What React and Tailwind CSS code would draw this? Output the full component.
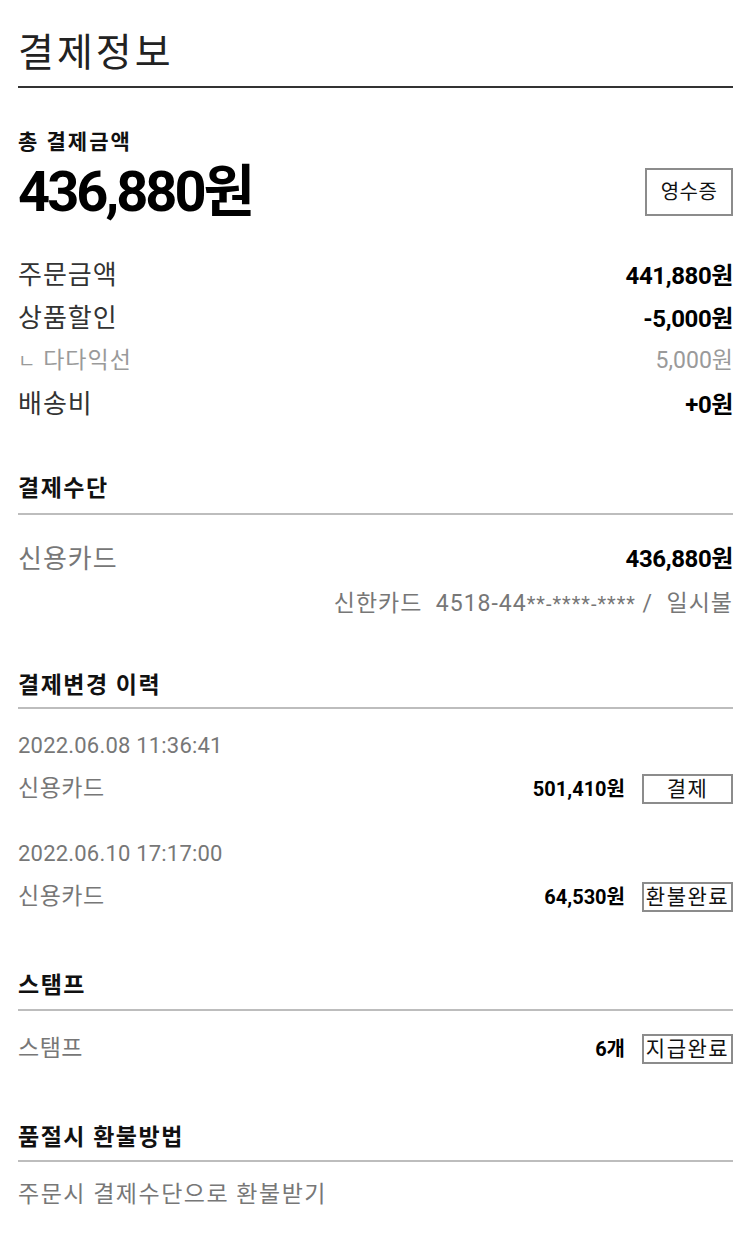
import React from "react";

const F = "font-['Roboto','Noto_Sans_CJK_KR',sans-serif]";

function SectionHeader({ children, mt, pb }) {
  return (
    <div className={`${mt} ${pb} border-b-2 border-[#bdbdbd]`}>
      <div className="text-[23px] leading-[22px] font-bold text-[#111] tracking-[1.5px]">{children}</div>
    </div>
  );
}

function Box({ children }) {
  return (
    <span className="inline-flex h-[30px] w-[91px] items-center justify-center border-2 border-[#8c8c8c] text-[21px] text-[#111] leading-none tracking-[1.5px]">
      {children}
    </span>
  );
}

export default function App() {
  return (
    <div className={`${F} w-[750px] bg-white pl-[18px] pr-[17px] pb-[32px]`}>
      <div className="pt-[33px] pb-[13px] border-b-2 border-[#333]">
        <div className="text-[39px] leading-[40px] text-[#222] font-normal tracking-[3px]">결제정보</div>
      </div>

      <div className="mt-[44px] text-[21px] leading-[20px] font-bold text-[#111] tracking-[2px]">총 결제금액</div>
      <div className="mt-[11px] flex h-[58px] items-center justify-between">
        <div className="text-[56px] leading-[58px] font-bold text-black tracking-[-3px]">436,880원</div>
        <span className="inline-flex h-[48px] w-[88px] items-center justify-center border-2 border-[#8c8c8c] text-[20px] text-[#111] tracking-[0.5px]">
          영수증
        </span>
      </div>

      <div className="mt-[33px]">
        <div className="flex h-[43px] items-center justify-between">
          <span className="text-[26px] text-[#333] tracking-[1px]">주문금액</span>
          <span className="text-[24px] font-bold text-black tracking-[-0.4px]">441,880원</span>
        </div>
        <div className="flex h-[43px] items-center justify-between">
          <span className="text-[26px] text-[#333] tracking-[1px]">상품할인</span>
          <span className="text-[24px] font-bold text-black tracking-[-0.4px]">-5,000원</span>
        </div>
        <div className="flex h-[43px] items-center justify-between">
          <span className="text-[23px] text-[#9a9a9a] tracking-[1px]"><span className="text-[19px]">ㄴ</span> 다다익선</span>
          <span className="text-[23px] text-[#9a9a9a]">5,000원</span>
        </div>
        <div className="flex h-[43px] items-center justify-between">
          <span className="text-[26px] text-[#333] tracking-[1px]">배송비</span>
          <span className="text-[24px] font-bold text-black tracking-[-0.4px]">+0원</span>
        </div>
      </div>

      <SectionHeader mt="mt-[52px]" pb="pb-[13px]">결제수단</SectionHeader>
      <div className="mt-[24px] flex h-[40px] items-center justify-between">
        <span className="text-[26px] text-[#777] tracking-[1px]">신용카드</span>
        <span className="text-[24px] font-bold text-black tracking-[-0.4px]">436,880원</span>
      </div>
      <div className="mt-[10px] flex h-[30px] items-center justify-end">
        <span className="text-[23px] text-[#777] tracking-[1px]">신한카드 &nbsp;4518-44<span className="text-[20px] tracking-[1px]">**-****-****</span> / &nbsp;일시불</span>
      </div>

      <SectionHeader mt="mt-[56px]" pb="pb-[10px]">결제변경 이력</SectionHeader>
      <div className="mt-[27px] h-[20px] leading-[20px] text-[22px] text-[#777] tracking-[0.2px]">2022.06.08 11:36:41</div>
      <div className="mt-[17px] flex h-[32px] items-center justify-between">
        <span className="text-[23px] text-[#777] tracking-[0.5px]">신용카드</span>
        <span className="flex items-center gap-[17px]">
          <span className="text-[20px] font-bold text-black">501,410원</span>
          <Box>결제</Box>
        </span>
      </div>
      <div className="mt-[39px] h-[20px] leading-[20px] text-[22px] text-[#777] tracking-[0.2px]">2022.06.10 17:17:00</div>
      <div className="mt-[17px] flex h-[32px] items-center justify-between">
        <span className="text-[23px] text-[#777] tracking-[0.5px]">신용카드</span>
        <span className="flex items-center gap-[17px]">
          <span className="text-[20px] font-bold text-black">64,530원</span>
          <Box>환불완료</Box>
        </span>
      </div>

      <SectionHeader mt="mt-[62px]" pb="pb-[12px]">스탬프</SectionHeader>
      <div className="mt-[22px] flex h-[32px] items-center justify-between">
        <span className="text-[23px] text-[#777] tracking-[0.5px]">스탬프</span>
        <span className="flex items-center gap-[17px]">
          <span className="text-[20px] font-bold text-black">6개</span>
          <Box>지급완료</Box>
        </span>
      </div>

      <SectionHeader mt="mt-[62px]" pb="pb-[11px]">품절시 환불방법</SectionHeader>
      <div className="mt-[23px] h-[20px] leading-[20px] text-[23px] text-[#777] tracking-[1.5px]">주문시 결제수단으로 환불받기</div>
    </div>
  );
}
